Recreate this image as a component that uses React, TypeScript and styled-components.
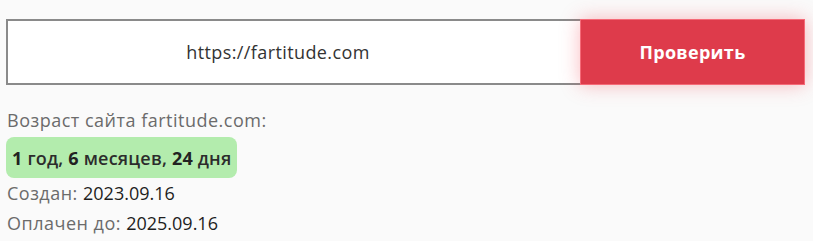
import { createGlobalStyle } from "styled-components";
import styled from "styled-components";

const GlobalStyle = createGlobalStyle`
	html, body {
		margin: 0;
		padding: 0;
		background: #fafafa;
	}
	body {
		font-family: "Open Sans", "DejaVu Sans", sans-serif;
	}
`;

const Page = styled.main`
	padding: 19px 8px 0 6px;
`;

const Form = styled.form`
	display: flex;
	height: 66px;
	margin-bottom: 20px;
`;

const UrlInput = styled.input`
	flex: 1;
	box-sizing: border-box;
	height: 100%;
	padding: 0 32px 0 0;
	border: 2px solid #8a8a8a;
	border-right: none;
	background: #fff;
	text-align: center;
	font-family: inherit;
	font-size: 18px;
	letter-spacing: 0.4px;
	color: #333;
	outline: 0;
`;

const CheckButton = styled.button`
	width: 225px;
	height: 100%;
	border: 1px solid #f56a78;
	background: #de3b4b;
	color: #fff;
	font-family: inherit;
	font-weight: 700;
	font-size: 18px;
	letter-spacing: 0.3px;
	box-shadow: 0 0 18px rgba(240, 60, 75, 0.35);
	cursor: pointer;
`;

const Info = styled.section`
	display: flex;
	flex-direction: column;
	align-items: flex-start;
	font-size: 18px;
	letter-spacing: 0.5px;
	color: #6b6b6b;
`;

const Line = styled.div`
	line-height: 30px;
	margin-left: 1px;
`;

const Value = styled.span`
	color: #1e1e1e;
	font-weight: 500;
	letter-spacing: 0;
`;

const Badge = styled.div`
	background: #b3ecad;
	border-radius: 8px;
	padding: 0 6px;
	height: 41px;
	display: flex;
	align-items: center;
	margin-top: 2px;
	color: #2c2c2c;
	font-weight: 600;
	letter-spacing: 0.2px;
`;

const Num = styled.b`
	font-weight: 700;
	color: #222;
`;

export default function App(): JSX.Element {
	return (
		<Page>
			<GlobalStyle />
			<Form onSubmit={(e) => e.preventDefault()}>
				<UrlInput type="text" defaultValue="https://fartitude.com" aria-label="URL" />
				<CheckButton type="submit">Проверить</CheckButton>
			</Form>
			<Info>
				<Line>Возраст сайта fartitude.com:</Line>
				<Badge>
					<span>
						<Num>1</Num> год, <Num>6</Num> месяцев, <Num>24</Num> дня
					</span>
				</Badge>
				<Line>
					Создан: <Value>2023.09.16</Value>
				</Line>
				<Line>
					Оплачен до: <Value>2025.09.16</Value>
				</Line>
			</Info>
		</Page>
	);
}
